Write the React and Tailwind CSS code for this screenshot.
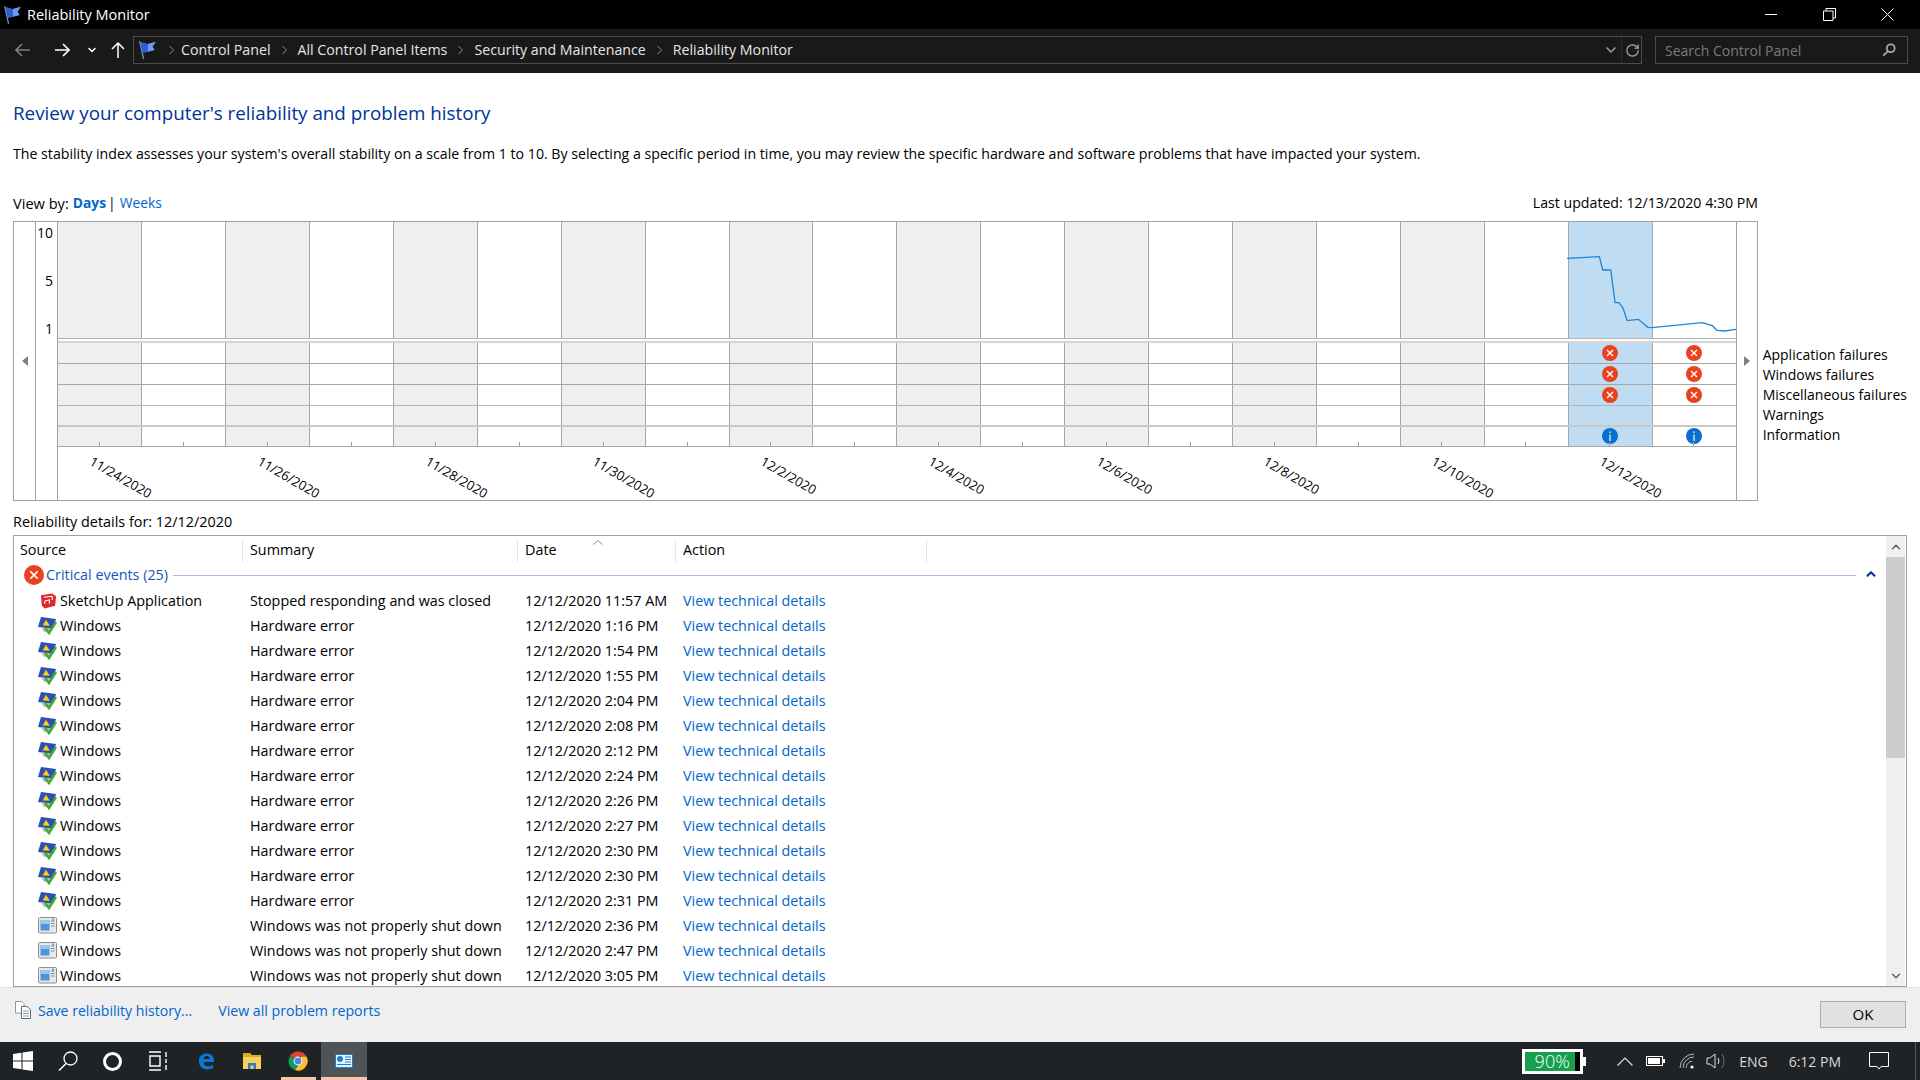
import { ChevronDown, ChevronUp, RotateCw } from 'lucide-react';

const DATE_LABELS = ['11/24/2020', '11/26/2020', '11/28/2020', '11/30/2020', '12/2/2020', '12/4/2020', '12/6/2020', '12/8/2020', '12/10/2020', '12/12/2020'];
const LEGEND = ['Application failures', 'Windows failures', 'Miscellaneous failures', 'Warnings', 'Information'];
const HW_TIMES = ['1:16', '1:54', '1:55', '2:04', '2:08', '2:12', '2:24', '2:26', '2:27', '2:30', '2:30', '2:31'];
const COLS = Array.from({ length: 20 }, (_, i) => i);

const EVENTS = [
  { icon: 'sketchup', source: 'SketchUp Application', summary: 'Stopped responding and was closed', date: '12/12/2020 11:57 AM' },
  ...HW_TIMES.map((t) => ({ icon: 'shield', source: 'Windows', summary: 'Hardware error', date: `12/12/2020 ${t} PM` })),
  ...['2:36', '2:47', '3:05'].map((t) => ({ icon: 'window', source: 'Windows', summary: 'Windows was not properly shut down', date: `12/12/2020 ${t} PM` })),
];

const FlagIcon = ({ className }) => (
  <svg viewBox="0 0 18 18" className={className}>
    <path d="M1.5 1 L5 17" stroke="#8a8f99" strokeWidth="1.2" fill="none" />
    <path d="M2 1.5 L9 3.5 L16 1.5 L13 6 L15 9 L9 10.5 L4 12 Z" fill="#2f5fd6" />
    <path d="M9 3.5 L16 1.5 L13 6 L15 9 L9 10.5 Z" fill="#6f9bf0" />
  </svg>
);

const ErrorIcon = ({ className }) => (
  <svg viewBox="0 0 16 16" className={className}>
    <circle cx="8" cy="8" r="8" fill="#e8421f" />
    <path d="M5 5 L11 11 M11 5 L5 11" stroke="#fff" strokeWidth="1.4" />
  </svg>
);

const InfoIcon = ({ className }) => (
  <svg viewBox="0 0 16 16" className={className}>
    <circle cx="8" cy="8" r="8" fill="#0a6fd0" />
    <rect x="7.4" y="6.5" width="1.2" height="6.5" fill="#fff" />
    <rect x="7.4" y="3.4" width="1.2" height="1.6" fill="#fff" />
  </svg>
);

const SketchUpIcon = () => (
  <svg viewBox="0 0 18 18" className="ml-[2px] h-[18px] w-[17px]">
    <path d="M1 3 L13 1 L17 4 L16 14 L5 17 L2 14 Z" fill="#e2262d" />
    <path d="M4 5 L13 4 M13 4 L13 8 M5 9 L10 8 L10 12 M5 9 L5 12" stroke="#fff" strokeWidth="1.2" fill="none" />
  </svg>
);

const ShieldIcon = () => (
  <svg viewBox="0 0 19 19" className="h-[19px] w-[19px]">
    <path d="M3 1 L18 3 L15 13 L0 11 Z" fill="#2a4fb8" />
    <path d="M3 11 L14 13 L13 15 L6 16 Z" fill="#b8bcc4" />
    <path d="M8 3.5 L12 10 L4.5 9.5 Z" fill="#f4d32a" stroke="#7a6a10" strokeWidth="0.4" />
    <path d="M7 12 L11 17 L18 6" stroke="#3fae2a" strokeWidth="2.6" fill="none" />
  </svg>
);

const WindowIcon = () => (
  <svg viewBox="0 0 19 19" className="h-[19px] w-[19px]">
    <rect x="0.5" y="1.5" width="18" height="15.5" rx="1" fill="#e8e8e8" stroke="#8e8e8e" />
    <rect x="2.5" y="4" width="9" height="10.5" fill="#4f93dc" />
    <rect x="2.5" y="4" width="9" height="4" fill="#9cc6ee" />
    <path d="M13 5 H16.5 M13 7.5 H16.5 M13 10 H16.5" stroke="#6f8fb0" strokeWidth="1.2" />
    <path d="M15 2.5 V4.5" stroke="#3f6fb0" strokeWidth="1.2" />
  </svg>
);

const SOURCE_ICONS = { sketchup: SketchUpIcon, shield: ShieldIcon, window: WindowIcon };

const ChartRow = ({ className, height, children }) => (
  <div className={`flex ${height} ${className}`}>
    {COLS.map((i) => (
      <div
        key={i}
        className={`flex flex-1 items-center justify-center border-r border-[#a6a6a6] last:border-r-0 ${i === 18 ? 'bg-[#c0dcf3]' : i % 2 === 0 ? 'bg-[#efefef]' : 'bg-white'}`}
      >
        {children && i >= 18 ? children : null}
      </div>
    ))}
  </div>
);

const Chart = () => (
  <div className="flex h-[280px] w-[1745px] border border-[#a0a0a0] bg-white">
    <div className="flex w-[22px] items-center justify-center border-r border-[#a0a0a0]">
      <div className="h-0 w-0 border-y-[5px] border-r-[6px] border-y-transparent border-r-[#808080]" />
    </div>
    <div className="flex w-[22px] flex-col items-end gap-[28px] border-r border-[#a0a0a0] pr-[4px] pt-[1px] text-right leading-[20px]">
      <span>10</span>
      <span>5</span>
      <span>1</span>
    </div>
    <div className="relative flex min-w-0 flex-1 flex-col border-r border-[#a0a0a0]">
      <ChartRow height="h-[117px]" className="border-b border-[#b4b4b4]" />
      <svg viewBox="200 36 506 348" preserveAspectRatio="none" className="absolute right-0 top-0 h-[116px] w-[169px]">
        <path
          d="M200 145 L297 140 L307 180 L331 180 L344 278 L356 278 L368 295 L380 332 L414 328 L442 352 L454 353 L605 338 L635 347 L649 361 L672 363 L706 358"
          fill="none"
          stroke="#1a86d9"
          strokeWidth="1.3"
          vectorEffect="non-scaling-stroke"
        />
      </svg>
      <div className="h-[4px] border-b-2 border-[#d4d4d4]" />
      <ChartRow height="h-[21px]" className="border-b border-[#a6a6a6]">
        <ErrorIcon className="h-4 w-4" />
      </ChartRow>
      <ChartRow height="h-[21px]" className="border-b border-[#a6a6a6]">
        <ErrorIcon className="h-4 w-4" />
      </ChartRow>
      <ChartRow height="h-[21px]" className="border-b border-[#b4b4b4]">
        <ErrorIcon className="h-4 w-4" />
      </ChartRow>
      <ChartRow height="h-[21px]" className="border-b-2 border-[#c8c8c8]" />
      <ChartRow height="h-[20px]" className="border-b border-[#a6a6a6]">
        <InfoIcon className="mb-[1px] h-4 w-4" />
      </ChartRow>
      <div className="relative flex flex-1">
        <div className="absolute -top-[5px] left-0 right-0 flex">
          {COLS.map((i) => (
            <div key={i} className="flex h-[5px] flex-1 justify-center">
              <div className="w-px bg-[#a0a0a0]" />
            </div>
          ))}
        </div>
        {DATE_LABELS.map((label) => (
          <div key={label} className="flex-[2] pl-[37px] pt-[6px]">
            <div className="w-max origin-top-left rotate-[30deg] whitespace-nowrap text-[13px] leading-[16px]">{label}</div>
          </div>
        ))}
      </div>
    </div>
    <div className="flex w-[20px] items-center justify-center">
      <div className="h-0 w-0 border-y-[5px] border-l-[6px] border-y-transparent border-l-[#808080]" />
    </div>
  </div>
);

const EventRow = ({ event }) => {
  const Icon = SOURCE_ICONS[event.icon];
  return (
    <div className="flex h-[25px] shrink-0 items-center">
      <div className="flex w-[229px] items-center pl-[24px]">
        <div className="flex w-[22px] justify-start">
          <Icon />
        </div>
        <span className="whitespace-nowrap">{event.source}</span>
      </div>
      <div className="w-[275px] whitespace-nowrap pl-[7px]">{event.summary}</div>
      <div className="w-[158px] whitespace-nowrap pl-[7px]">{event.date}</div>
      <div className="whitespace-nowrap pl-[7px] text-[#0066cc]">View technical details</div>
    </div>
  );
};

const EventList = () => (
  <div className="flex h-[452px] border border-[#a0a0a0] bg-white text-[14.35px]">
    <div className="flex min-w-0 flex-1 flex-col overflow-hidden">
      <div className="relative flex h-[26px] shrink-0 pt-[4px] leading-[20px]">
        <div className="w-[229px] border-r border-[#e5e5e5] pl-[6px]">Source</div>
        <div className="w-[275px] border-r border-[#e5e5e5] pl-[7px]">Summary</div>
        <div className="relative w-[158px] border-r border-[#e5e5e5] pl-[7px]">
          Date
          <svg viewBox="0 0 10 5" className="absolute left-[75px] top-0 h-[5px] w-[10px]">
            <path d="M0.5 4.5 L5 0.5 L9.5 4.5" stroke="#8a8a8a" fill="none" />
          </svg>
        </div>
        <div className="w-[251px] border-r border-[#e5e5e5] pl-[7px]">Action</div>
      </div>
      <div className="flex h-[26px] shrink-0 items-center pl-[10px]">
        <ErrorIcon className="mb-[1px] h-5 w-5 shrink-0" />
        <span className="ml-[2px] whitespace-nowrap text-[#1556b5]">Critical events (25)</span>
        <div className="ml-[5px] h-px flex-1 bg-[#a9c0e6]" />
        <ChevronUp className="mx-[8px] mb-[3px] h-[14px] w-[14px] text-[#003399]" strokeWidth={3.5} />
      </div>
      {EVENTS.map((event, i) => (
        <EventRow key={i} event={event} />
      ))}
    </div>
    <div className="mr-px flex w-[19px] flex-col bg-[#f0f0f0]">
      <div className="flex h-[21px] items-center justify-center">
        <ChevronUp className="h-[14px] w-[14px] text-[#606060]" strokeWidth={2.5} />
      </div>
      <div className="h-[201px] bg-[#cdcdcd]" />
      <div className="flex-1" />
      <div className="flex h-[21px] items-center justify-center">
        <ChevronDown className="h-[14px] w-[14px] text-[#606060]" strokeWidth={2.5} />
      </div>
    </div>
  </div>
);

const BreadcrumbSep = () => (
  <svg viewBox="0 0 6 10" className="mx-[10px] h-[10px] w-[7px] shrink-0">
    <path d="M1 1 L5 5 L1 9" stroke="#8a8a8a" fill="none" />
  </svg>
);

const NavBar = () => (
  <div className="flex h-[44px] shrink-0 items-start bg-[#191919] pt-[7px] text-[#e6e6e6]">
    <div className="flex h-[28px] w-[133px] items-center">
      <svg viewBox="0 0 16 14" className="ml-[15px] h-[14px] w-[16px]">
        <path d="M15 7 H1 M7 1 L1 7 L7 13" stroke="#7e7e7e" strokeWidth="1.6" fill="none" />
      </svg>
      <svg viewBox="0 0 16 14" className="ml-[23px] h-[14px] w-[16px]">
        <path d="M1 7 H15 M9 1 L15 7 L9 13" stroke="#fff" strokeWidth="1.6" fill="none" />
      </svg>
      <ChevronDown className="ml-[16px] h-[12px] w-[12px] text-white" strokeWidth={3} />
      <svg viewBox="0 0 14 16" className="ml-[13px] h-[18px] w-[14px]">
        <path d="M7 16 V1 M1 7 L7 1 L13 7" stroke="#fff" strokeWidth="1.5" fill="none" />
      </svg>
    </div>
    <div className="flex h-[28px] w-[1509px] items-center border border-[#4b4b4b] text-[14.2px]">
      <FlagIcon className="ml-[4px] h-[20px] w-[20px]" />
      <BreadcrumbSep />
      <span className="-ml-[4px] whitespace-nowrap">Control Panel</span>
      <BreadcrumbSep />
      <span className="whitespace-nowrap">All Control Panel Items</span>
      <BreadcrumbSep />
      <span className="whitespace-nowrap">Security and Maintenance</span>
      <BreadcrumbSep />
      <span className="whitespace-nowrap">Reliability Monitor</span>
      <div className="flex-1" />
      <ChevronDown className="mr-[2px] h-[16px] w-[16px] text-[#9a9a9a]" strokeWidth={2.5} />
      <div className="flex h-full w-[20px] items-center justify-center border-l border-[#2c2c2c] pl-[2px]">
        <RotateCw className="h-[15px] w-[15px] text-[#a8a8a8]" strokeWidth={2} />
      </div>
    </div>
    <div className="ml-[13px] flex h-[28px] w-[253px] items-center justify-between border border-[#4b4b4b] pl-[9px] pr-[11px] text-[#7a7a7a]">
      <span className="whitespace-nowrap">Search Control Panel</span>
      <svg viewBox="0 0 16 16" className="h-[14px] w-[14px]">
        <circle cx="10" cy="6" r="4.5" stroke="#a8a8a8" strokeWidth="2" fill="none" />
        <path d="M7 9 L1.5 14.5" stroke="#a8a8a8" strokeWidth="2.2" />
      </svg>
    </div>
  </div>
);

const TitleBar = () => (
  <div className="flex h-[29px] shrink-0 items-center bg-black pr-[4px] text-white">
    <FlagIcon className="ml-[3px] h-[20px] w-[20px]" />
    <span className="ml-[4px] text-[14.5px]">Reliability Monitor</span>
    <div className="flex-1" />
    <div className="flex w-[58px] justify-center">
      <div className="h-px w-[12px] bg-white" />
    </div>
    <div className="flex w-[58px] justify-center">
      <svg viewBox="0 0 13 13" className="h-[13px] w-[13px]">
        <path d="M3 3 V0.5 H12.5 V10 H10 M0.5 3 H10 V12.5 H0.5 Z" stroke="#fff" fill="none" />
      </svg>
    </div>
    <div className="flex w-[58px] justify-center">
      <svg viewBox="0 0 13 13" className="h-[13px] w-[13px]">
        <path d="M0.5 0.5 L12.5 12.5 M12.5 0.5 L0.5 12.5" stroke="#fff" fill="none" />
      </svg>
    </div>
  </div>
);

const TaskButton = ({ width = 'w-[45px]', className = '', children }) => (
  <div className={`relative flex h-full ${width} items-center justify-center ${className}`}>{children}</div>
);

const Taskbar = () => (
  <div className="flex h-[38px] shrink-0 items-center bg-[#1f2326] text-[#d9d9d9]">
    <TaskButton>
      <svg viewBox="0 0 20 20" className="h-[20px] w-[20px]">
        <path d="M0 3 L8.5 1.8 V9.4 H0 Z M9.5 1.6 L20 0 V9.4 H9.5 Z M0 10.4 H8.5 V18.2 L0 17 Z M9.5 10.4 H20 V20 L9.5 18.4 Z" fill="#fff" />
      </svg>
    </TaskButton>
    <TaskButton>
      <svg viewBox="0 0 20 20" className="h-[20px] w-[20px]">
        <circle cx="12.5" cy="7.5" r="6.5" stroke="#fff" strokeWidth="1.3" fill="none" />
        <path d="M8 12.5 L1 19.5" stroke="#fff" strokeWidth="1.5" />
      </svg>
    </TaskButton>
    <TaskButton>
      <div className="h-[19px] w-[19px] rounded-full border-[3px] border-white" />
    </TaskButton>
    <TaskButton className="mr-[3px]">
      <svg viewBox="0 0 20 20" className="h-[20px] w-[20px]">
        <path d="M1 1 H13 M1 19 H13 M2 5 H12 V15 H2 Z M18 1 V6 M18 8 V12 M18 14 V19" stroke="#fff" strokeWidth="1.4" fill="none" />
      </svg>
    </TaskButton>
    <TaskButton width="w-[46px]">
      <svg viewBox="0 0 18 18" className="h-[18px] w-[17px]">
        <path d="M1 9 C1 3 5 1 9.5 1 C14 1 17 4 17 10 H6 C6 13 8 14.5 11 14.5 C13 14.5 15 14 16 13 V16.5 C14.5 17.5 12.5 18 10 18 C5 18 1 15 1 9 Z M6 7 H12.5 C12.5 5 11 3.8 9 3.8 C7.5 3.8 6.3 5 6 7 Z" fill="#0a78d7" fillRule="evenodd" />
      </svg>
    </TaskButton>
    <TaskButton width="w-[46px]">
      <svg viewBox="0 0 18 16" className="h-[16px] w-[18px]">
        <path d="M0 0 H7 L9 2 H18 V4 H0 Z" fill="#e0a92a" />
        <path d="M0 4 H18 V16 H0 Z" fill="#f7cf5a" />
        <path d="M5 10 H13 V16 H10.5 V12.5 H7.5 V16 H5 Z" fill="#2a7fd0" />
      </svg>
    </TaskButton>
    <TaskButton width="w-[46px]">
      <svg viewBox="0 0 20 20" className="h-[20px] w-[20px]">
        <path d="M10 10 L2 5 A9.5 9.5 0 0 1 18.5 5.5 L10 5.5 Z" fill="#db4437" />
        <path d="M2 5 A9.5 9.5 0 0 0 7 19 L11 11 Z" fill="#0f9d58" />
        <path d="M18.5 5.5 A9.5 9.5 0 0 1 7 19 L12 11 L13 5.5 Z" fill="#fbc02d" />
        <circle cx="10" cy="10" r="4.4" fill="#fff" />
        <circle cx="10" cy="10" r="3.4" fill="#4285f4" />
      </svg>
      <div className="absolute bottom-0 left-[6px] h-[3px] w-[35px] bg-[#f9c4a8]" />
    </TaskButton>
    <TaskButton width="w-[46px]" className="bg-[#4f5456]">
      <svg viewBox="0 0 18 14" className="h-[14px] w-[18px]">
        <rect x="0.5" y="0.5" width="17" height="13" fill="#e8f3fc" stroke="#1a7fd0" />
        <rect x="2" y="2" width="6" height="6" rx="3" fill="#1a7fd0" />
        <path d="M10 3 H16 M10 5.5 H16 M10 8 H16 M2 10.5 H16" stroke="#1a7fd0" />
      </svg>
      <div className="absolute bottom-0 left-0 h-[3px] w-full bg-[#f9c4a8]" />
    </TaskButton>
    <div className="flex-1" />
    <div className="flex items-center">
      <div className="relative flex h-[25px] w-[61px] items-center border-[3px] border-white bg-[#16a04e]">
        <span className="w-[50px] pl-[4px] text-center text-[18px] font-light leading-none text-white">90%</span>
        <div className="h-full w-[5px] bg-black" />
        <div className="absolute -right-[6px] top-[5px] h-[9px] w-[3px] bg-white" />
      </div>
      <svg viewBox="0 0 16 9" className="ml-[34px] h-[9px] w-[16px]">
        <path d="M0.5 8.5 L8 1 L15.5 8.5" stroke="#e0e0e0" strokeWidth="1.2" fill="none" />
      </svg>
      <svg viewBox="0 0 19 10" className="ml-[13px] h-[10px] w-[19px]">
        <rect x="0.5" y="0.5" width="16" height="9" fill="none" stroke="#fff" />
        <rect x="2" y="2" width="12" height="6" fill="#fff" />
        <rect x="17" y="3" width="2" height="4" fill="#fff" />
      </svg>
      <svg viewBox="0 0 16 16" className="ml-[14px] h-[16px] w-[16px]">
        <path d="M1 15 A14 14 0 0 1 15 1 M4 15 A11 11 0 0 1 15 4 M7 15 A8 8 0 0 1 13 8" stroke="#b8b8b8" fill="none" />
        <circle cx="13" cy="14" r="1.6" fill="#fff" />
      </svg>
      <svg viewBox="0 0 20 16" className="ml-[11px] h-[16px] w-[20px]">
        <path d="M1 5 H4 L9 1 V15 L4 11 H1 Z" stroke="#e0e0e0" fill="none" />
        <path d="M12 5 Q14 8 12 11" stroke="#e0e0e0" fill="none" />
        <path d="M16 1 Q20 8 16 15" stroke="#6f6f6f" fill="none" />
      </svg>
      <span className="ml-[13px] text-[14px]">ENG</span>
      <span className="ml-[21px] whitespace-nowrap text-[14px]">6:12 PM</span>
      <svg viewBox="0 0 20 18" className="ml-[28px] h-[18px] w-[20px]">
        <path d="M0.5 0.5 H19.5 V14.5 H12 L10 17 L8 14.5 H0.5 Z" stroke="#fff" fill="none" />
      </svg>
    </div>
    <div className="ml-[26px] mr-[4px] h-full w-px bg-[#5a5a5a]" />
  </div>
);

export default function App() {
  return (
    <div className="flex h-[1080px] w-[1920px] flex-col overflow-hidden bg-white font-['Open_Sans','Noto_Sans',sans-serif] text-[14px] text-black">
      <TitleBar />
      <NavBar />
      <main className="flex-1 px-[13px] leading-[20px]">
        <h1 className="mt-[26px] h-[28px] text-[18.8px] font-normal leading-[28px] text-[#003399]">
          Review your computer's reliability and problem history
        </h1>
        <p className="mt-[17px] h-[20px] whitespace-nowrap text-[14.17px]">
          The stability index assesses your system's overall stability on a scale from 1 to 10. By selecting a specific period in time, you may review the specific hardware and software problems that have impacted your system.
        </p>
        <div className="mt-[29px] flex h-[20px] w-[1745px] items-center justify-between">
          <div className="flex items-center">
            <span className="text-[14.6px]">View by:</span>
            <span className="ml-[4px] text-[13.8px] font-bold text-[#0066cc]">Days</span>
            <span className="ml-[2px]">|</span>
            <span className="ml-[4px] text-[13.8px] text-[#0066cc]">Weeks</span>
          </div>
          <div className="text-[14.15px]">Last updated: 12/13/2020 4:30 PM</div>
        </div>
        <div className="mt-[8px] flex">
          <Chart />
          <ul className="ml-[5px] mt-[124px]">
            {LEGEND.map((item) => (
              <li key={item} className="h-[20px] whitespace-nowrap">{item}</li>
            ))}
          </ul>
        </div>
        <div className="mt-[11px] h-[20px] text-[14.4px]">Reliability details for: 12/12/2020</div>
        <div className="mt-[3px]">
          <EventList />
        </div>
      </main>
      <footer className="flex h-[55px] shrink-0 items-start border-t border-[#e0e0e0] bg-[#efefef] pl-[15px] pr-[14px] pt-[13px]">
        <svg viewBox="0 0 16 18" className="h-[18px] w-[16px]">
          <path d="M0.5 0.5 H7 L9 2.5 V12 H0.5 Z" fill="#fff" stroke="#8a9aae" />
          <path d="M6.5 5.5 H12 L15.5 8.5 V17.5 H6.5 Z" fill="#fff" stroke="#5a6a80" />
          <path d="M8 10 H14 M8 12.5 H14 M8 15 H14" stroke="#8a9aae" />
        </svg>
        <span className="ml-[7px] text-[14.1px] leading-[20px] text-[#0066cc]">Save reliability history...</span>
        <span className="ml-[26px] text-[14.2px] leading-[20px] text-[#0066cc]">View all problem reports</span>
        <div className="flex-1" />
        <button type="button" className="h-[27px] w-[86px] border border-[#adadad] bg-[#e1e1e1] text-[15px] leading-none">
          OK
        </button>
      </footer>
      <Taskbar />
    </div>
  );
}
